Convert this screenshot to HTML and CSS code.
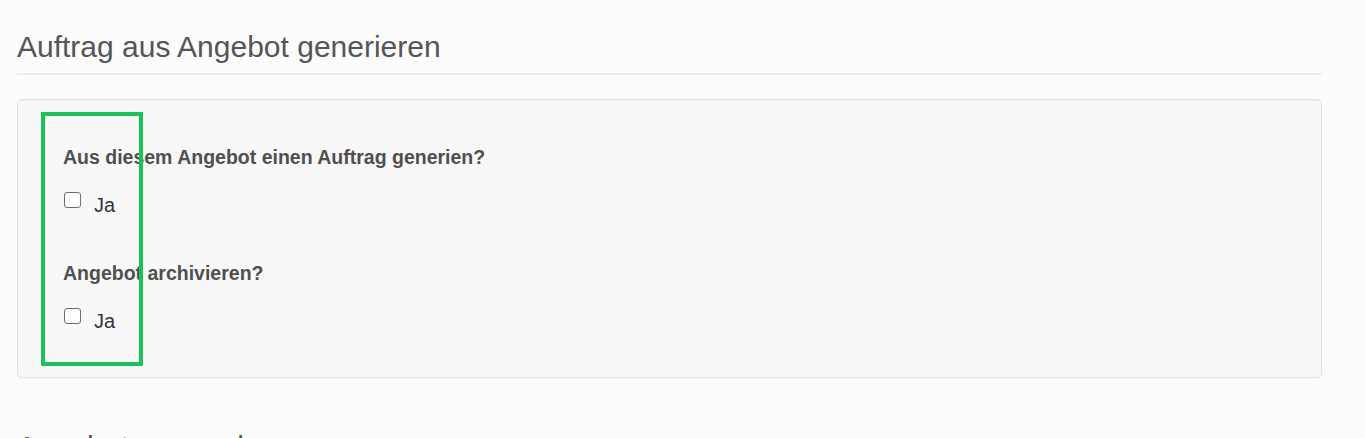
FILE: index.html
```html
<!DOCTYPE html>
<html lang="de">
<head>
<meta charset="utf-8">
<title>Auftrag aus Angebot generieren</title>
<link rel="stylesheet" href="styles.css">
</head>
<body>
<div class="container">
  <h2 class="page-header">Auftrag aus Angebot generieren</h2>
  <div class="well">
    <div class="highlight"></div>
    <div class="form-group">
      <div class="control-label">Aus diesem Angebot einen Auftrag generien?</div>
      <label class="check"><span class="box"></span><span class="check-text">Ja</span></label>
    </div>
    <div class="form-group second">
      <div class="control-label">Angebot archivieren?</div>
      <label class="check"><span class="box"></span><span class="check-text">Ja</span></label>
    </div>
  </div>
  <h2 class="page-header next">Angebot versenden</h2>
</div>
</body>
</html>
```
FILE: styles.css
```css
html, body {
  margin: 0;
  padding: 0;
  background: #fcfcfc;
  font-family: "Liberation Sans", Arial, Helvetica, sans-serif;
  color: #333;
  overflow: hidden;
  height: 438px;
}
.container {
  width: 1305px;
  padding-left: 17px;
}
.page-header {
  margin: 30px 0 0;
  padding-bottom: 10px;
  font-size: 30px;
  line-height: 33px;
  font-weight: normal;
  color: #555;
  border-bottom: 2px solid #ececec;
}
.page-header.next {
  margin-top: 52px;
  border-bottom: none;
}
.well {
  position: relative;
  margin-top: 24px;
  background: #f8f8f8;
  border: 1px solid #e1e1e1;
  border-radius: 5px;
  box-shadow: inset 0 1px 1px rgba(0,0,0,0.04), 0 1px 2px rgba(0,0,0,0.04);
  padding: 45px 0 44px 45px;
}
.highlight {
  position: absolute;
  left: 23px;
  top: 12px;
  width: 94px;
  height: 246px;
  border: 4px solid #1dc15a;
}
.control-label {
  font-size: 19.5px;
  line-height: 24px;
  font-weight: bold;
  color: #4f4f4f;
}
.check {
  display: flex;
  align-items: flex-start;
  margin-top: 24px;
  font-size: 20px;
  line-height: 24px;
  color: #333;
}
.box {
  width: 17px;
  height: 16px;
  margin: -1px 13px 0 1px;
  border: 1px solid #6f6f6f;
  border-radius: 3px;
  background: #fff;
  box-sizing: border-box;
}
.form-group.second {
  margin-top: 44px;
}
```
